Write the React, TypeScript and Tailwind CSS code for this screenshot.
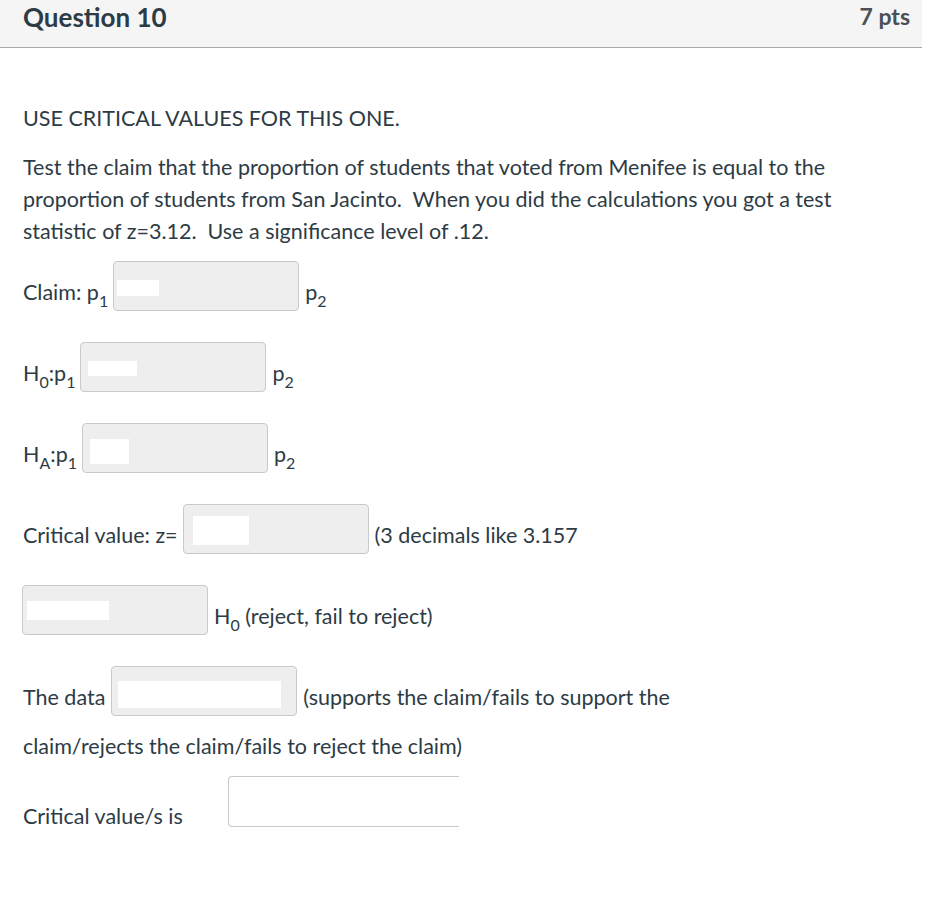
import React from "react";

const font = { fontFamily: "Lato, 'Open Sans', sans-serif" };

type BoxProps = { pl: string; pt: string; w: string; h: string; width?: string };

// grey answer box with a white blank inside
const AnswerBox = ({ pl, pt, w, h, width = "w-[186px]" }: BoxProps) => (
  <div
    className={`${width} h-[50px] shrink-0 rounded-[4px] border border-[#c9c9c9] bg-[#eeeeee] ${pl} ${pt}`}
  >
    <div className={`bg-white ${w} ${h}`} />
  </div>
);

const P = ({ n }: { n: string }) => (
  <span>
    p<sub className="text-[16px] align-[-3px]">{n}</sub>
  </span>
);

const App = () => {
  return (
    <div className="bg-white min-h-[898px] w-[932px] text-[#2d3b45]" style={font}>
      <div className="w-[922px] h-[48px] bg-[#f5f5f5] border-b border-[#a8a8a8] flex items-center justify-between pl-[23px] pr-[12px]">
        <h2 className="text-[26px] font-bold leading-none -mt-[14px]">Question 10</h2>
        <span className="text-[23px] font-bold text-[#4a5055] leading-none -mt-[14px]">7 pts</span>
      </div>

      <div className="pl-[23px] text-[21.5px] leading-[32px]">
        <p className="mt-[54px]">USE CRITICAL VALUES FOR THIS ONE.</p>
        <p className="mt-[17px] w-[840px]">
          Test the claim that the proportion of students that voted from Menifee is equal to the
          proportion of students from San Jacinto.&nbsp; When you did the calculations you got a test
          statistic of z=3.12.&nbsp; Use a significance level of .12.
        </p>

        <div className="mt-[14px] flex flex-col gap-[31px]">
          <div className="flex items-center">
            <span className="pt-[11px] mr-[5px]">
              Claim: <P n="1" />
            </span>
            <AnswerBox pl="pl-[3px]" pt="pt-[18px]" w="w-[42px]" h="h-[16px]" />
            <span className="pt-[11px] ml-[6px]">
              <P n="2" />
            </span>
          </div>

          <div className="flex items-center">
            <span className="pt-[11px] mr-[5px]">
              H<sub className="text-[16px] align-[-3px]">0</sub>:<P n="1" />
            </span>
            <AnswerBox pl="pl-[7px]" pt="pt-[18px]" w="w-[49px]" h="h-[15px]" />
            <span className="pt-[11px] ml-[6px]">
              <P n="2" />
            </span>
          </div>

          <div className="flex items-center">
            <span className="pt-[11px] mr-[5px]">
              H<sub className="text-[16px] align-[-3px]">A</sub>:<P n="1" />
            </span>
            <AnswerBox pl="pl-[7px]" pt="pt-[15px]" w="w-[39px]" h="h-[25px]" />
            <span className="pt-[11px] ml-[6px]">
              <P n="2" />
            </span>
          </div>

          <div className="flex items-center">
            <span className="pt-[11px] mr-[5px]">Critical value: z=</span>
            <AnswerBox pl="pl-[9px]" pt="pt-[11px]" w="w-[56px]" h="h-[29px]" />
            <span className="pt-[11px] ml-[6px]">(3 decimals like 3.157</span>
          </div>

          <div className="flex items-center -ml-[1px]">
            <AnswerBox pl="pl-[4px]" pt="pt-[15px]" w="w-[82px]" h="h-[19px]" />
            <span className="pt-[11px] ml-[6px]">
              H<sub className="text-[16px] align-[-3px]">0</sub> (reject, fail to reject)
            </span>
          </div>

          <div className="flex items-center">
            <span className="pt-[11px] mr-[6px]">The data</span>
            <AnswerBox pl="pl-[6px]" pt="pt-[14px]" w="w-[163px]" h="h-[27px]" />
            <span className="pt-[11px] ml-[6px]">(supports the claim/fails to support the</span>
          </div>
        </div>

        <p className="mt-[14px]">claim/rejects the claim/fails to reject the claim)</p>

        <div className="mt-[14px] flex items-end">
          <span className="w-[205px] -mb-[5px]">Critical value/s is</span>
          <div className="w-[231px] h-[51px] rounded-l-[4px] border border-r-0 border-[#c9c9c9] bg-white" />
        </div>
      </div>
    </div>
  );
};

export default App;
